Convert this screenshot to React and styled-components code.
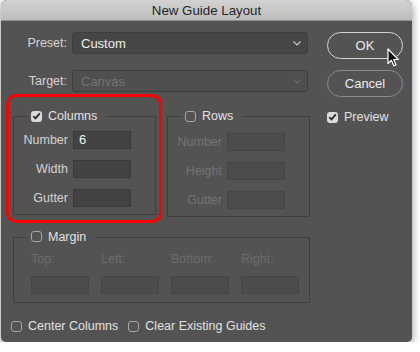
import { Fragment } from 'react';
import styled, { createGlobalStyle } from 'styled-components';

const GlobalStyle = createGlobalStyle`
  html, body {
    margin: 0;
    background: #ffffff;
  }
  body {
    font-family: "Liberation Sans", Arial, sans-serif;
  }
`;

const Window = styled.div`
  width: 411px;
  height: 342px;
  margin-left: 1px;
  background: #535353;
  border-radius: 6px 6px 5px 5px;
  box-shadow: 0 3px 8px rgba(0, 0, 0, 0.45);
  overflow: hidden;
  display: flex;
  flex-direction: column;
`;

const TitleBar = styled.div`
  height: 21px;
  flex: none;
  box-sizing: border-box;
  background: linear-gradient(#d2d2d2, #bdbdbd);
  border-bottom: 1px solid #8e8e8e;
  color: #262626;
  font-size: 13.3px;
  line-height: 21px;
  text-align: center;
`;

const Body = styled.div`
  display: flex;
  padding: 11px 9px 0 12px;
  color: #d4d4d4;
  font-size: 12.5px;
`;

const LeftCol = styled.div`
  width: 297px;
  display: flex;
  flex-direction: column;
`;

const RightCol = styled.div`
  margin-left: auto;
  width: 76px;
  display: flex;
  flex-direction: column;
`;

const FieldRow = styled.div`
  display: grid;
  grid-template-columns: 54px 236px;
  column-gap: 5px;
  align-items: center;
  margin-top: ${(p) => p.$top || 0}px;
`;

const Label = styled.span`
  text-align: right;
  color: ${(p) => (p.$disabled ? '#747474' : '#d4d4d4')};
  white-space: nowrap;
`;

const Select = styled.div`
  height: 22px;
  box-sizing: border-box;
  border: 1px solid #3e3e3e;
  border-radius: 3px;
  background: ${(p) => (p.$disabled ? '#4f4f4f' : '#464646')};
  color: ${(p) => (p.$disabled ? '#747474' : '#eeeeee')};
  display: flex;
  align-items: center;
  justify-content: space-between;
  padding: 0 6px 0 8px;
  font-size: 13px;
`;

const Chevron = ({ color }) => (
  <svg width="8" height="5" viewBox="0 0 8 5">
    <polyline points="0.5,0.5 4,4 7.5,0.5" fill="none" stroke={color} strokeWidth="1.1" />
  </svg>
);

const Button = styled.div`
  position: relative;
  height: 27px;
  box-sizing: border-box;
  border-radius: 14px;
  border: ${(p) => (p.$primary ? '1.5px solid #d6d6d6' : '1px solid #8c8c8c')};
  color: #ececec;
  font-size: 13px;
  display: flex;
  align-items: center;
  justify-content: center;
  margin-top: ${(p) => p.$top || 0}px;
`;

const Cursor = styled.svg`
  position: absolute;
  left: 59px;
  top: 15px;
`;

const Box = styled.span`
  width: 11px;
  height: 11px;
  flex: none;
  box-sizing: border-box;
  border-radius: 3px;
  border: ${(p) => (p.$checked ? 'none' : '1px solid #a6a6a6')};
  background: ${(p) => (p.$checked ? '#dadada' : 'transparent')};
  display: flex;
  align-items: center;
  justify-content: center;
`;

const CheckItem = styled.label`
  display: inline-flex;
  align-items: center;
  gap: 6px;
  color: #e2e2e2;
  font-size: 12.5px;
  line-height: 14px;
  margin-top: ${(p) => p.$top || 0}px;
`;

const Check = ({ checked, children, top }) => (
  <CheckItem $top={top}>
    <Box $checked={checked}>
      {checked && (
        <svg width="9" height="8" viewBox="0 0 9 8">
          <polyline points="1.3,4.2 3.5,6.4 7.8,1.3" fill="none" stroke="#2a2a2a" strokeWidth="1.8" />
        </svg>
      )}
    </Box>
    {children}
  </CheckItem>
);

const GroupRow = styled.div`
  display: flex;
  gap: 11px;
  margin-top: ${(p) => p.$top}px;
`;

const Group = styled.fieldset`
  margin: 0;
  min-width: 0;
  width: ${(p) => p.$width}px;
  box-sizing: border-box;
  border: 1px solid #3f3f3f;
  padding: ${(p) => p.$pad};
`;

const Legend = styled.legend`
  padding: 0 10px 0 4px;
  margin-left: 13px;
  line-height: 14px;
`;

// red annotation drawn over the Columns group
const Highlight = styled.div`
  position: relative;
  &::after {
    content: '';
    position: absolute;
    top: -15px;
    left: -7px;
    right: -6px;
    bottom: -6px;
    border: 3px solid #ff0000;
    border-radius: 10px;
    pointer-events: none;
  }
`;

const InputGrid = styled.div`
  display: grid;
  grid-template-columns: 54px 58px;
  column-gap: 5px;
  row-gap: 11px;
  align-items: center;
`;

const Input = styled.div`
  height: 18px;
  box-sizing: border-box;
  border: 1px solid ${(p) => (p.$disabled ? '#464646' : '#3a3a3a')};
  background: ${(p) => (p.$disabled ? '#4c4c4c' : '#434343')};
  color: #f0f0f0;
  font-size: 13px;
  line-height: 16px;
  padding-left: 5px;
`;

const MarginGrid = styled.div`
  display: grid;
  grid-template-columns: repeat(4, 58px);
  column-gap: 12px;
  row-gap: 10px;
  line-height: 14px;
  margin-left: 17px;
`;

const MarginLabel = styled.span`
  color: #6c6c6c;
`;

const BottomRow = styled.div`
  display: flex;
  gap: 10px;
  margin: 16px 0 0 -2px;
`;

function FieldGroup({ title, checked, disabled, labels, values = [] }) {
  return (
    <Group $width={143} $pad="8px 0 7px 0">
      <Legend>
        <Check checked={checked}>{title}</Check>
      </Legend>
      <InputGrid>
        {labels.map((l, i) => (
          <Fragment key={l}>
            <Label $disabled={disabled}>{l}</Label>
            <Input $disabled={disabled}>{values[i]}</Input>
          </Fragment>
        ))}
      </InputGrid>
    </Group>
  );
}

export default function App() {
  return (
    <>
      <GlobalStyle />
      <Window>
        <TitleBar>New Guide Layout</TitleBar>
        <Body>
          <LeftCol>
            <FieldRow>
              <Label>Preset:</Label>
              <Select>
                Custom
                <Chevron color="#c8c8c8" />
              </Select>
            </FieldRow>
            <FieldRow $top={16}>
              <Label>Target:</Label>
              <Select $disabled>
                Canvas
                <Chevron color="#6a6a6a" />
              </Select>
            </FieldRow>
            <GroupRow $top={17}>
              <Highlight>
                <FieldGroup title="Columns" checked labels={['Number', 'Width', 'Gutter']} values={['6']} />
              </Highlight>
              <FieldGroup title="Rows" disabled labels={['Number', 'Height', 'Gutter']} />
            </GroupRow>
            <GroupRow $top={13}>
              <Group $width={297} $pad="7px 0 8px 0">
                <Legend>
                  <Check>Margin</Check>
                </Legend>
                <MarginGrid>
                  <MarginLabel>Top:</MarginLabel>
                  <MarginLabel>Left:</MarginLabel>
                  <MarginLabel>Bottom:</MarginLabel>
                  <MarginLabel>Right:</MarginLabel>
                  <Input $disabled />
                  <Input $disabled />
                  <Input $disabled />
                  <Input $disabled />
                </MarginGrid>
              </Group>
            </GroupRow>
            <BottomRow>
              <Check>Center Columns</Check>
              <Check>Clear Existing Guides</Check>
            </BottomRow>
          </LeftCol>
          <RightCol>
            <Button $primary>
              OK
              <Cursor width="13" height="20" viewBox="0 0 13 20">
                <path d="M1 1 L1 15.5 L4.4 12.3 L6.8 17.8 L9 16.9 L6.7 11.5 L11.3 11.5 Z" fill="#111" stroke="#fff" strokeWidth="1.2" strokeLinejoin="round" />
              </Cursor>
            </Button>
            <Button $top={11}>Cancel</Button>
            <Check checked top={13}>Preview</Check>
          </RightCol>
        </Body>
      </Window>
    </>
  );
}
